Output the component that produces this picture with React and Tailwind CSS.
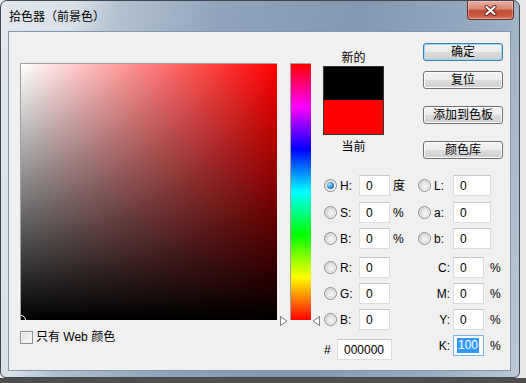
import clsx from "clsx";

function Radio({ checked }) {
  return (
    <span className="flex h-[13px] w-[13px] shrink-0 items-center justify-center rounded-full border border-[#8c8c8c] bg-[linear-gradient(135deg,#d6d6d6,#fdfdfd)]">
      {checked ? (
        <span className="h-[7px] w-[7px] rounded-full bg-[radial-gradient(circle_at_35%_35%,#a8e6ff,#2a86cc_55%,#0e4f8a)]" />
      ) : (
        <span className="h-[9px] w-[9px] rounded-full border border-[#d4d4d4] bg-[linear-gradient(135deg,#e2e2e2,#fafafa)]" />
      )}
    </span>
  );
}

function Input({ value, className, selected }) {
  return (
    <div
      className={clsx(
        "flex h-[21px] shrink-0 items-center border bg-white text-[12px] leading-none text-black",
        selected ? "border-[#7eb4ea] pl-[3px]" : "border-[#dcdcdc] border-t-[#c6c6c6] pl-[6px]",
        className
      )}
    >
      {selected ? <span className="bg-[#3399ff] px-[1px] leading-[15px] text-white">{value}</span> : value}
    </div>
  );
}

// left half of a value row: radio, label, box, unit
function LeftItem({ label, value, unit, checked }) {
  return (
    <div className="flex h-[21px] w-[95px] items-center">
      <span className="ml-[4px]">
        <Radio checked={checked} />
      </span>
      <span className="ml-[3px] w-[19px]">{label}</span>
      <Input value={value} className="w-[31px]" />
      {unit && <span className="ml-[3px]">{unit}</span>}
    </div>
  );
}

function LabItem({ label }) {
  return (
    <div className="flex h-[21px] items-center">
      <span className="ml-[3px]">
        <Radio />
      </span>
      <span className="ml-[3px] w-[19px]">{label}</span>
      <Input value="0" className="w-[38px]" />
    </div>
  );
}

function CmykItem({ label, value, selected }) {
  return (
    <div className="flex h-[21px] items-center">
      <span className="w-[35px] text-right">{label}</span>
      <Input value={value} selected={selected} className="ml-[3px] w-[31px]" />
      <span className="ml-[6px]">%</span>
    </div>
  );
}

function Button({ children, primary, className }) {
  return (
    <div
      className={clsx(
        "flex h-[18px] w-[80px] items-center justify-center rounded-[3px] border text-[12px] leading-none text-black bg-[linear-gradient(to_bottom,#f4f4f4_0%,#ececec_48%,#dcdcdc_52%,#cfcfcf_100%)]",
        primary ? "border-[#3c7fb1] shadow-[inset_0_0_0_1px_#9ad8f5]" : "border-[#707070] shadow-[inset_0_0_0_1px_#fbfbfb]",
        className
      )}
    >
      {children}
    </div>
  );
}

export default function App() {
  return (
    <div className="flex h-[383px] w-[526px] flex-col overflow-hidden bg-[#e9e9e9] font-['Liberation_Sans','Noto_Sans_CJK_SC',sans-serif] text-[12px] text-black">
      {/* Window */}
      <div className="flex h-[378px] w-[520px] shrink-0 flex-col rounded-t-[7px] rounded-b-[6px] border border-[#3f4852] bg-[linear-gradient(100deg,#e3e8ee_0%,#d8e0e8_13%,#b3c2d1_20%,#8fa4ba_38%,#8299b1_62%,#96abc0_84%,#bccad7_100%)]">
        {/* Title bar */}
        <div className="flex h-[30px] shrink-0 items-start">
          <span className="ml-[8px] mt-[8px] leading-[16px]">拾色器（前景色）</span>
          <div className="ml-auto mr-[5px] flex h-[19px] w-[47px] items-center justify-center rounded-b-[4px] border border-t-0 border-[#6b2a22] bg-[linear-gradient(to_bottom,#e9ab9c_0%,#d98774_45%,#c34c37_52%,#c9573f_80%,#d97d62_100%)] shadow-[inset_0_0_0_1px_rgba(255,255,255,0.3)]">
            <svg width="13" height="11" viewBox="0 0 13 11">
              <path d="M2.5 2 L10.5 9 M10.5 2 L2.5 9" stroke="#5e1f16" strokeWidth="4" strokeLinecap="round" />
              <path d="M2.5 2 L10.5 9 M10.5 2 L2.5 9" stroke="#ffffff" strokeWidth="2.2" strokeLinecap="round" />
            </svg>
          </div>
        </div>

        {/* Client area */}
        <div className="mx-[7px] flex h-[340px] w-[503px] shrink-0 border border-[#8397ac] bg-[#f0f0f0]">
          {/* Color field */}
          <div className="ml-[11px] w-[257px] shrink-0">
            <div className="relative mt-[31px] h-[257px] w-[257px] overflow-hidden border-l border-t border-[#a0a0a0] bg-[linear-gradient(to_right,#ffffff,#ff0000)]">
              <div className="h-full w-full bg-[linear-gradient(to_bottom,rgba(0,0,0,0),#000000)]" />
              <div className="absolute -bottom-[5px] -left-[5px] h-[10px] w-[10px] rounded-full border border-white" />
            </div>
            <div className="mt-[9px] flex items-center">
              <span className="h-[13px] w-[13px] border border-[#8e8f8f] bg-[linear-gradient(135deg,#dcdcdc,#fbfbfb)] shadow-[inset_0_0_0_1px_#f4f4f4]" />
              <span className="ml-[3px] leading-[16px]">只有 Web 颜色</span>
            </div>
          </div>

          {/* Hue slider */}
          <div className="relative w-[43px] shrink-0">
            <div className="ml-[13px] mt-[31px] h-[257px] w-[21px] border-l border-t border-[#a0a0a0] bg-[linear-gradient(to_bottom,#ff0000,#ff00ff,#0000ff,#00ffff,#00ff00,#ffff00,#ff0000)]" />
            <svg className="absolute left-[3px] top-[284px]" width="8" height="10" viewBox="0 0 8 10">
              <path d="M0.5 0.5 L7 5 L0.5 9.5 Z" fill="#ffffff" stroke="#7a7a7a" />
            </svg>
            <svg className="absolute left-[35px] top-[284px]" width="8" height="10" viewBox="0 0 8 10">
              <path d="M7.5 0.5 L1 5 L7.5 9.5 Z" fill="#ffffff" stroke="#7a7a7a" />
            </svg>
          </div>

          {/* Right panel */}
          <div className="flex w-[190px] shrink-0 flex-col">
            <div className="flex h-[143px] shrink-0">
              <div className="ml-[3px] flex w-[61px] flex-col items-center">
                <span className="mt-[18px] leading-[16px]">新的</span>
                <div className="flex h-[69px] w-[61px] flex-col border border-[#333333]">
                  <div className="h-[33px] bg-black" />
                  <div className="flex-1 bg-[#ff0000]" />
                </div>
                <span className="mt-[4px] leading-[16px]">当前</span>
              </div>
              <div className="ml-[39px] flex flex-col">
                <Button primary className="mt-[11px]">确定</Button>
                <Button className="mt-[10px]">复位</Button>
                <Button className="mt-[17px]">添加到色板</Button>
                <Button className="mt-[17px]">颜色库</Button>
              </div>
            </div>

            <div className="flex">
              <LeftItem label="H:" value="0" unit="度" checked />
              <LabItem label="L:" />
            </div>
            <div className="mt-[6px] flex">
              <LeftItem label="S:" value="0" unit="%" />
              <LabItem label="a:" />
            </div>
            <div className="mt-[5px] flex">
              <LeftItem label="B:" value="0" unit="%" />
              <LabItem label="b:" />
            </div>
            <div className="mt-[8px] flex">
              <LeftItem label="R:" value="0" />
              <CmykItem label="C:" value="0" />
            </div>
            <div className="mt-[5px] flex">
              <LeftItem label="G:" value="0" />
              <CmykItem label="M:" value="0" />
            </div>
            <div className="mt-[5px] flex">
              <LeftItem label="B:" value="0" />
              <CmykItem label="Y:" value="0" />
            </div>
            <div className="mt-[5px] flex items-start">
              <div className="mt-[4px] flex h-[21px] w-[95px] items-center">
                <span className="ml-[4px] w-[13px]">#</span>
                <Input value="000000" className="w-[55px]" />
              </div>
              <CmykItem label="K:" value="100" selected />
            </div>
          </div>
        </div>
      </div>
      <div className="flex-1 bg-[#4e4e4e]" />
    </div>
  );
}
